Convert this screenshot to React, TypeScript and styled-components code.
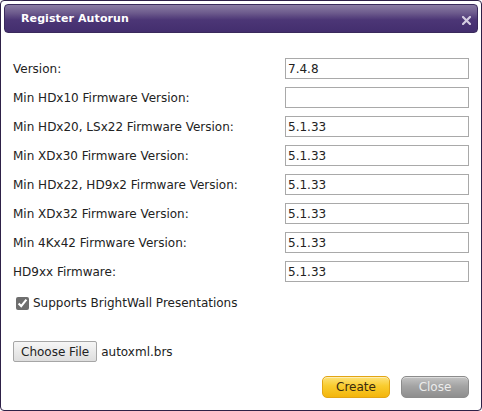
import * as React from "react";
import styled, { createGlobalStyle } from "styled-components";

const GlobalStyle = createGlobalStyle`
  html, body {
    margin: 0;
    padding: 0;
    background: #ffffff;
  }
  body {
    font-family: "DejaVu Sans", Verdana, sans-serif;
  }
`;

const Dialog = styled.div`
  box-sizing: border-box;
  width: 482px;
  height: 411px;
  border: 1px solid #2e2148;
  border-radius: 4px;
  background: #ffffff;
  padding: 3px 3px 0;
  display: flex;
  flex-direction: column;
`;

const TitleBar = styled.div`
  height: 29px;
  border-radius: 4px;
  border: 1px solid #3a2a5c;
  box-sizing: border-box;
  background: linear-gradient(
    to bottom,
    #8a7ca4 0%,
    #6c5a8c 30%,
    #4c3676 55%,
    #432e6e 100%
  );
  display: flex;
  align-items: center;
  justify-content: space-between;
  padding: 0 6px 0 16px;
`;

const Title = styled.span`
  color: #ffffff;
  font-weight: bold;
  font-size: 11px;
  letter-spacing: 0.1px;
`;

const CloseIcon = styled.svg`
  width: 9px;
  height: 9px;
  margin-top: 3px;
`;

const Body = styled.div`
  flex: 1;
  display: flex;
  flex-direction: column;
  padding: 25px 9px 0 9px;
`;

const Fields = styled.div`
  display: grid;
  grid-template-columns: 1fr 184px;
  row-gap: 8px;
  align-items: center;
`;

const Label = styled.label`
  font-size: 12px;
  color: #222222;
`;

const TextBox = styled.input`
  box-sizing: border-box;
  width: 184px;
  height: 21px;
  border: 1px solid #a9a9a9;
  padding: 0 2px;
  font-family: "DejaVu Sans", Verdana, sans-serif;
  font-size: 12px;
  color: #222222;
  outline: none;
`;

const CheckRow = styled.label`
  display: flex;
  align-items: center;
  gap: 4px;
  margin-top: 14px;
  margin-left: 3px;
  font-size: 12px;
  color: #222222;
`;

const Check = styled.input`
  margin: 0;
  width: 13px;
  height: 13px;
  accent-color: #6e6e6e;
`;

const FileRow = styled.div`
  display: flex;
  align-items: center;
  gap: 4px;
  margin-top: 31px;
  font-size: 12px;
  color: #222222;
`;

const FileButton = styled.button`
  box-sizing: border-box;
  height: 21px;
  padding: 0 7px;
  border: 1px solid #a6a6a6;
  border-radius: 2px;
  background: linear-gradient(to bottom, #f6f6f6, #dedede);
  font-family: "DejaVu Sans", Verdana, sans-serif;
  font-size: 12px;
  color: #222222;
`;

const Footer = styled.div`
  display: flex;
  justify-content: flex-end;
  gap: 11px;
  margin-top: 14px;
  padding-right: 0;
`;

const ActionButton = styled.button<{ $tone: "primary" | "muted" }>`
  box-sizing: border-box;
  width: 68px;
  height: 22px;
  border-radius: 5px;
  font-family: "DejaVu Sans", Verdana, sans-serif;
  font-size: 12px;
  border: 1px solid ${(p) => (p.$tone === "primary" ? "#e2a514" : "#8c8c8c")};
  color: ${(p) => (p.$tone === "primary" ? "#3a2a10" : "#ececec")};
  background: ${(p) =>
    p.$tone === "primary"
      ? "linear-gradient(to bottom, #fde27a 0%, #f9cc2e 45%, #f3b50c 100%)"
      : "linear-gradient(to bottom, #c4c4c4 0%, #a4a4a4 45%, #8e8e8e 100%)"};
  box-shadow: inset 0 1px 0 rgba(255, 255, 255, 0.45);
`;

const fields: { label: string; value: string }[] = [
  { label: "Version:", value: "7.4.8" },
  { label: "Min HDx10 Firmware Version:", value: "" },
  { label: "Min HDx20, LSx22 Firmware Version:", value: "5.1.33" },
  { label: "Min XDx30 Firmware Version:", value: "5.1.33" },
  { label: "Min HDx22, HD9x2 Firmware Version:", value: "5.1.33" },
  { label: "Min XDx32 Firmware Version:", value: "5.1.33" },
  { label: "Min 4Kx42 Firmware Version:", value: "5.1.33" },
  { label: "HD9xx Firmware:", value: "5.1.33" },
];

export default function App() {
  return (
    <>
      <GlobalStyle />
      <Dialog>
        <TitleBar>
          <Title>Register Autorun</Title>
          <CloseIcon viewBox="0 0 9 9">
            <path
              d="M1 1 L8 8 M8 1 L1 8"
              stroke="#d4cce0"
              strokeWidth="2.2"
              strokeLinecap="square"
            />
          </CloseIcon>
        </TitleBar>
        <Body>
          <Fields>
            {fields.map((f) => (
              <React.Fragment key={f.label}>
                <Label>{f.label}</Label>
                <TextBox defaultValue={f.value} />
              </React.Fragment>
            ))}
          </Fields>
          <CheckRow>
            <Check type="checkbox" defaultChecked />
            Supports BrightWall Presentations
          </CheckRow>
          <FileRow>
            <FileButton>Choose File</FileButton>
            <span>autoxml.brs</span>
          </FileRow>
          <Footer>
            <ActionButton $tone="primary">Create</ActionButton>
            <ActionButton $tone="muted">Close</ActionButton>
          </Footer>
        </Body>
      </Dialog>
    </>
  );
}
